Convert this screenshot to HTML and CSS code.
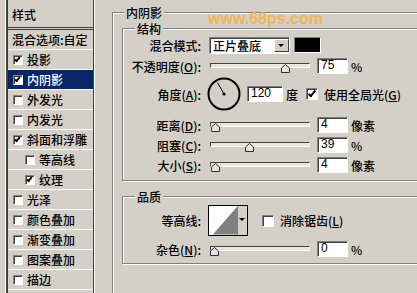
FILE: index.html
```html
<!DOCTYPE html>
<html>
  <head>
    <title>图层样式 - 内阴影</title>
    <link rel="stylesheet" href="styles.css">
  </head>
  <body>

    <div class="style-list">
      <div class="list-head">样式</div>
      <div class="list-item">混合选项:自定</div>
      <div class="list-item"><span class="check on"></span>投影</div>
      <div class="list-item selected"><span class="check on"></span>内阴影</div>
      <div class="list-item"><span class="check"></span>外发光</div>
      <div class="list-item"><span class="check"></span>内发光</div>
      <div class="list-item"><span class="check on"></span>斜面和浮雕</div>
      <div class="list-item sub"><span class="check"></span>等高线</div>
      <div class="list-item sub"><span class="check on"></span>纹理</div>
      <div class="list-item"><span class="check"></span>光泽</div>
      <div class="list-item"><span class="check"></span>颜色叠加</div>
      <div class="list-item"><span class="check"></span>渐变叠加</div>
      <div class="list-item"><span class="check"></span>图案叠加</div>
      <div class="list-item"><span class="check"></span>描边</div>
    </div>

    <div class="panel">
      <span class="watermark">www.68ps.com</span>

      <fieldset class="group outer">
        <legend>内阴影</legend>

        <!-- 结构 -->
        <fieldset class="group structure">
          <legend>结构</legend>

          <div class="row mode">
            <span class="label">混合模式:</span>
            <div class="select">
              正片叠底
              <span class="select-btn"></span>
            </div>
            <span class="swatch"></span>
          </div>

          <div class="row">
            <span class="label">不透明度(<u>O</u>):</span>
            <div class="slider">
              <div class="track"></div>
              <svg class="thumb" style="left: 71%" width="9" height="9"><path d="M0.5 8.5V4L4.5 0.5 8.5 4V8.5Z" fill="#e6e4de" stroke="#303030"/></svg>
            </div>
            <span class="field">75</span>
            <span class="unit">%</span>
          </div>

          <div class="row angle">
            <span class="label">角度(<u>A</u>):</span>
            <svg class="dial" width="34" height="34" viewBox="0 0 34 34">
              <circle cx="17" cy="17" r="15.5" fill="none" stroke="#000" stroke-width="2"/>
              <line x1="17" y1="17" x2="10.5" y2="5.5" stroke="#000"/>
              <circle cx="17" cy="17" r="1.6"/>
            </svg>
            <span class="field wide">120</span>
            <span class="unit">度</span>
            <span class="check big on"></span>
            <span class="check-label">使用全局光(<u>G</u>)</span>
          </div>

          <div class="row spaced">
            <span class="label">距离(<u>D</u>):</span>
            <div class="slider">
              <div class="track"></div>
              <svg class="thumb" style="left: 1%" width="9" height="9"><path d="M0.5 8.5V4L4.5 0.5 8.5 4V8.5Z" fill="#e6e4de" stroke="#303030"/></svg>
            </div>
            <span class="field">4</span>
            <span class="unit">像素</span>
          </div>

          <div class="row">
            <span class="label">阻塞(<u>C</u>):</span>
            <div class="slider">
              <div class="track"></div>
              <svg class="thumb" style="left: 35%" width="9" height="9"><path d="M0.5 8.5V4L4.5 0.5 8.5 4V8.5Z" fill="#e6e4de" stroke="#303030"/></svg>
            </div>
            <span class="field">39</span>
            <span class="unit">%</span>
          </div>

          <div class="row">
            <span class="label">大小(<u>S</u>):</span>
            <div class="slider">
              <div class="track"></div>
              <svg class="thumb" style="left: 1%" width="9" height="9"><path d="M0.5 8.5V4L4.5 0.5 8.5 4V8.5Z" fill="#e6e4de" stroke="#303030"/></svg>
            </div>
            <span class="field">4</span>
            <span class="unit">像素</span>
          </div>
        </fieldset>

        <!-- 品质 -->
        <fieldset class="group quality">
          <legend>品质</legend>

          <div class="row contour-row">
            <span class="label">等高线:</span>
            <div class="contour">
              <svg width="29" height="29" viewBox="0 0 29 29">
                <rect width="29" height="29" fill="#fff"/>
                <polygon points="4,29 29,0 29,29" fill="#808080"/>
              </svg>
              <span class="drop"></span>
            </div>
            <span class="check big"></span>
            <span class="check-label">消除锯齿(<u>L</u>)</span>
          </div>

          <div class="row noise">
            <span class="label">杂色(<u>N</u>):</span>
            <div class="slider">
              <div class="track"></div>
              <svg class="thumb" style="left: 0%" width="9" height="9"><path d="M0.5 8.5V4L4.5 0.5 8.5 4V8.5Z" fill="#e6e4de" stroke="#303030"/></svg>
            </div>
            <span class="field">0</span>
            <span class="unit">%</span>
          </div>
        </fieldset>
      </fieldset>
    </div>

  </body>
</html>
```

FILE: styles.css
```css
*,
*:before,
*:after {
  box-sizing: border-box;
}

body {
  margin: 0;
  height: 293px;
  overflow: hidden;
  display: flex;
  align-items: flex-start;
  background: #d4d0c8;
  color: #000;
  font-family: "Noto Sans CJK SC", "Liberation Sans", sans-serif;
  font-size: 12px;
  font-weight: 500;
}

u {
  text-decoration: underline;
}

/* left list of styles */
.style-list {
  flex: none;
  width: 88px;
  height: 293px;
  margin-left: 6px;
  border-left: 2px solid #404040;
  border-right: 1px solid #404040;
  box-shadow: -1px 0 #fff, 1px 0 #fff;
}

.list-head {
  height: 30px;
  padding: 6px 0 0 4px;
  line-height: 18px;
  border-bottom: 3px double #404040;
}

.list-item {
  display: flex;
  align-items: center;
  gap: 4px;
  height: 20px;
  padding-left: 5px;
  line-height: 19px;
  border-bottom: 1px solid #fff;
  white-space: nowrap;
}

.list-item:nth-child(2) {
  padding-left: 4px;
}

.list-item.sub {
  padding-left: 17px;
}

.list-item.selected {
  background: #0a246a;
  color: #fff;
}

.check {
  position: relative;
  flex: none;
  width: 10px;
  height: 10px;
  background: #fff;
  border: 1px solid;
  border-color: #808080 #fff #fff #808080;
  box-shadow: inset 1px 1px #404040;
}

.check.big {
  width: 12px;
  height: 12px;
}

.check.on:after {
  content: "";
  position: absolute;
  left: 2px;
  top: 0px;
  width: 3px;
  height: 6px;
  border: solid #000;
  border-width: 0 2px 2px 0;
  transform: rotate(40deg);
}

.check.big.on:after {
  left: 3px;
  top: 0px;
  width: 4px;
  height: 8px;
}

/* right panel */
.panel {
  position: relative;
  flex: none;
  width: 340px;
  margin: 5px 0 0 18px;
}

.watermark {
  position: absolute;
  left: 96px;
  top: 6px;
  z-index: 2;
  font-family: "Liberation Sans", sans-serif;
  font-size: 16px;
  font-weight: bold;
  letter-spacing: 0;
  line-height: 16px;
  color: rgba(248, 172, 40, 0.75);
}

fieldset.group {
  min-width: 0;
  margin: 0;
  padding: 0;
  border: 1px solid #808080;
  box-shadow: inset 1px 1px #fff, 1px 1px #fff;
}

legend {
  padding: 0 2px;
  line-height: 15px;
  background: #d4d0c8;
}

.group.outer {
  padding: 1px 0 60px 9px;
}

.group.outer > legend {
  margin-left: 2px;
}

.structure {
  padding-bottom: 7px !important;
}

.structure > legend,
.quality > legend {
  margin-left: 12px;
}

.quality {
  margin-top: 8px !important;
  padding-bottom: 6px !important;
}

.row {
  display: flex;
  align-items: center;
  height: 16px;
  margin-top: 4px;
  white-space: nowrap;
}

.row.mode {
  height: 18px;
  margin-top: 0;
}

.row.angle {
  height: 34px;
  margin-top: 3px;
}

.row.spaced {
  margin-top: 6px;
}

.row.contour-row {
  height: 31px;
  margin-top: 1px;
}

.row.noise {
  margin-top: 5px;
}

.label {
  flex: none;
  width: 78px;
  margin-right: 8px;
  text-align: right;
}

.select {
  display: flex;
  align-items: center;
  width: 81px;
  height: 17px;
  padding-left: 3px;
  background: #fff;
  border: 1px solid;
  border-color: #808080 #fff #fff #808080;
  box-shadow: inset 1px 1px #404040;
}

.select-btn {
  position: relative;
  width: 15px;
  height: 13px;
  margin-left: auto;
  background: #d4d0c8;
  border: 1px solid;
  border-color: #fff #404040 #404040 #fff;
}

.select-btn:after,
.drop:after {
  content: "";
  position: absolute;
  left: 3px;
  top: 4px;
  border: 3px solid transparent;
  border-top: 3px solid #000;
  border-bottom: 0;
}

.swatch {
  width: 27px;
  height: 16px;
  margin-left: 4px;
  background: #000;
  border: 1px solid;
  border-color: #808080 #fff #fff #808080;
}

.slider {
  position: relative;
  flex: none;
  width: 100px;
  height: 16px;
  margin-left: 1px;
  padding-top: 5px;
}

.track {
  height: 5px;
  background: #e8e6e1;
  border: 1px solid;
  border-color: #404040 #fff #fff #404040;
}

.thumb {
  position: absolute;
  top: 6px;
}

.field {
  flex: none;
  width: 31px;
  height: 16px;
  margin-left: 7px;
  padding-left: 3px;
  background: #fff;
  border: 1px solid;
  border-color: #808080 #fff #fff #808080;
  box-shadow: inset 1px 1px #404040;
  font-family: "Liberation Sans", sans-serif;
  font-weight: normal;
  line-height: 13px;
}

.field.wide {
  width: 36px;
  margin-left: 6px;
}

.unit {
  margin-left: 3px;
}

.dial {
  flex: none;
  margin-left: -2px;
}

.angle .check {
  margin-left: 8px;
}

.check-label {
  margin-left: 6px;
}

.contour {
  display: flex;
  width: 40px;
  height: 31px;
  margin-left: -1px;
  border: 1px solid #000;
  background: #fff;
}

.drop {
  position: relative;
  width: 10px;
  background: #d4d0c8;
  border-left: 1px solid #808080;
}

.drop:after {
  left: 1px;
  top: 12px;
}

.contour-row .check {
  margin-left: 14px;
}
```
